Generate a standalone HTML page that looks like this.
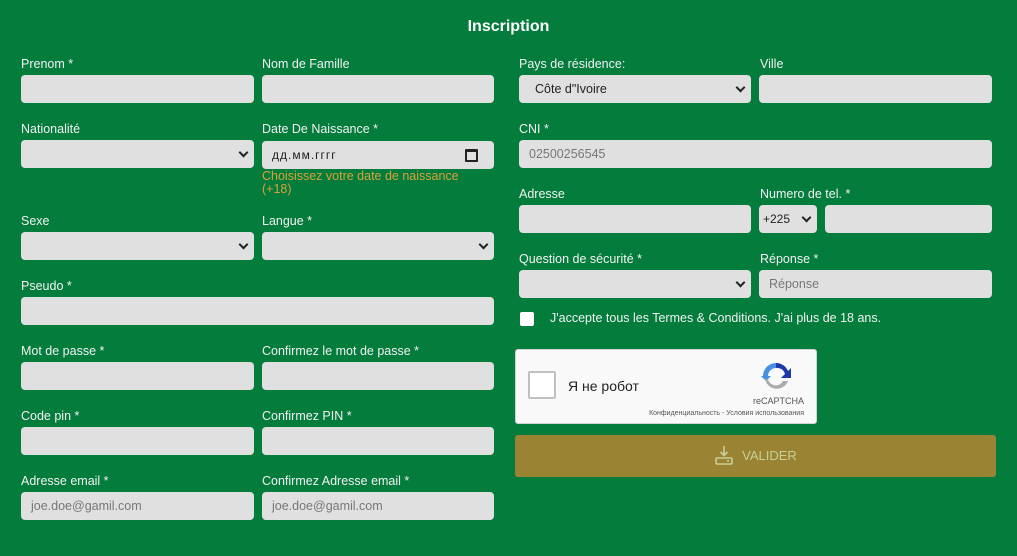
<!DOCTYPE html>
<html><head><meta charset="utf-8"><style>
*{box-sizing:border-box;margin:0;padding:0}
body{width:1017px;height:556px;background:#037c3c;font-family:"Liberation Sans",Arial,sans-serif;position:relative;overflow:hidden;color:#fff}
.l{position:absolute;font-size:12.5px;line-height:15px;color:#f2f2f2}
.i{position:absolute;height:28px;background:#e0e0e0;border-radius:4px;font-size:12.5px;color:#777;padding-left:10px;line-height:28px}
.s::after{content:"";position:absolute;right:7px;top:9px;width:5px;height:5px;border-right:2px solid #222;border-bottom:2px solid #222;transform:rotate(45deg)}
h1{position:absolute;left:0;width:1017px;top:18px;text-align:center;font-size:16px;font-weight:bold}
</style></head><body>
<h1>Inscription</h1>
<div class="l" style="left:21px;top:57px">Prenom *</div><div class="l" style="left:262px;top:57px">Nom de Famille</div>
<div class="i" style="left:21px;top:75px;width:233px"></div><div class="i" style="left:262px;top:75px;width:232px"></div>
<div class="l" style="left:21px;top:122px">Nationalité</div><div class="l" style="left:262px;top:122px">Date De Naissance *</div>
<div class="i s" style="left:21px;top:140px;width:233px"></div>
<div class="i" style="left:262px;top:141px;width:232px;color:#222;font-size:12px;letter-spacing:1px">дд.мм.гггг<span style="position:absolute;right:16px;top:8px;width:13px;height:13px;border:2px solid #222;border-top-width:3px;border-radius:1px"></span></div>
<div class="l" style="left:262px;top:170px;color:#d9a23a;line-height:13px">Choisissez votre date de naissance<br>(+18)</div>
<div class="l" style="left:21px;top:214px">Sexe</div><div class="l" style="left:262px;top:214px">Langue *</div>
<div class="i s" style="left:21px;top:232px;width:233px"></div><div class="i s" style="left:262px;top:232px;width:232px"></div>
<div class="l" style="left:21px;top:279px">Pseudo *</div>
<div class="i" style="left:21px;top:297px;width:473px"></div>
<div class="l" style="left:21px;top:344px">Mot de passe *</div><div class="l" style="left:262px;top:344px">Confirmez le mot de passe *</div>
<div class="i" style="left:21px;top:362px;width:233px"></div><div class="i" style="left:262px;top:362px;width:232px"></div>
<div class="l" style="left:21px;top:409px">Code pin *</div><div class="l" style="left:262px;top:409px">Confirmez PIN *</div>
<div class="i" style="left:21px;top:427px;width:233px"></div><div class="i" style="left:262px;top:427px;width:232px"></div>
<div class="l" style="left:21px;top:474px">Adresse email *</div><div class="l" style="left:262px;top:474px">Confirmez Adresse email *</div>
<div class="i" style="left:21px;top:492px;width:233px">joe.doe@gamil.com</div><div class="i" style="left:262px;top:492px;width:232px">joe.doe@gamil.com</div>

<div class="l" style="left:519px;top:57px">Pays de résidence:</div><div class="l" style="left:760px;top:57px">Ville</div>
<div class="i s" style="left:519px;top:75px;width:232px;color:#222;padding-left:16px">Côte d"Ivoire</div><div class="i" style="left:759px;top:75px;width:233px"></div>
<div class="l" style="left:519px;top:122px">CNI *</div>
<div class="i" style="left:519px;top:140px;width:473px">02500256545</div>
<div class="l" style="left:519px;top:187px">Adresse</div><div class="l" style="left:760px;top:187px">Numero de tel. *</div>
<div class="i" style="left:519px;top:205px;width:232px"></div>
<div class="i s" style="left:759px;top:205px;width:58px;color:#222;padding-left:4px;font-size:12px">+225</div>
<div class="i" style="left:825px;top:205px;width:167px"></div>
<div class="l" style="left:519px;top:252px">Question de sécurité *</div><div class="l" style="left:760px;top:252px">Réponse *</div>
<div class="i s" style="left:519px;top:270px;width:232px"></div><div class="i" style="left:759px;top:270px;width:233px">Réponse</div>
<div style="position:absolute;left:520px;top:312px;width:14px;height:14px;background:#fff;border-radius:2px"></div>
<div class="l" style="left:550px;top:311px">J'accepte tous les Termes &amp; Conditions. J'ai plus de 18 ans.</div>
<div style="position:absolute;left:515px;top:349px;width:302px;height:75px;background:#f9f9f9;border:1px solid #d3d3d3;border-radius:3px">
<div style="position:absolute;left:12px;top:21px;width:28px;height:28px;background:#fff;border:2px solid #c1c1c1;border-radius:2px"></div>
<div style="position:absolute;left:52px;top:28px;font-size:14px;color:#222">Я не робот</div>
<svg style="position:absolute;left:244px;top:10px" width="32" height="32" viewBox="0 0 32 32"><path d="M16 3a13 13 0 0 1 12 8l3-3v10h-10l4-4a8 8 0 0 0-9-6z" fill="#1c3aa9"/><path d="M3 16A13 13 0 0 1 16 3v5a8 8 0 0 0-8 8l3 0-5 5-5-5z" fill="#4a90e2"/><path d="M5 19a12 12 0 0 0 23 2h-5a8 8 0 0 1-15-2z" fill="#ababab"/></svg>
<div style="position:absolute;right:12px;top:46px;font-size:9px;color:#555">reCAPTCHA</div>
<div style="position:absolute;right:12px;top:60px;font-size:7px;color:#555">Конфиденциальность - Условия использования</div>
</div>
<div style="position:absolute;left:515px;top:435px;width:481px;height:42px;background:#9a8433;border-radius:3px;color:#c8cf9a;font-size:13px;line-height:42px;text-align:center">
<svg style="vertical-align:middle;margin-right:8px;margin-top:-4px" width="20" height="20" viewBox="0 0 20 20" fill="none" stroke="#c8cf9a" stroke-width="1.6"><path d="M10 1v9M6.5 7l3.5 3.5L13.5 7"/><rect x="2" y="13" width="16" height="6" rx="1"/><path d="M13 16h2"/></svg>VALIDER</div>
</body></html>
